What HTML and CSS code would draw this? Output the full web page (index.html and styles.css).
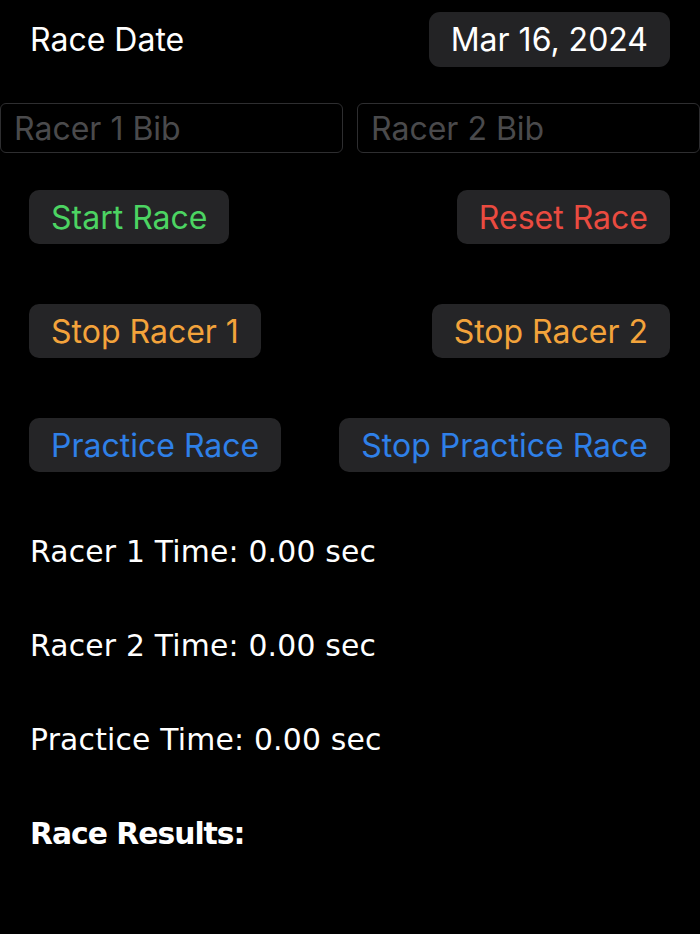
FILE: index.html
```html
<!DOCTYPE html>
<html lang="en">
<head>
    <meta charset="UTF-8">
    <meta name="viewport" content="width=device-width, initial-scale=1.0">
    <title>Race Timer</title>
    <link rel="stylesheet" href="styles.css">
</head>
<body>
    <div class="date-row">
        <span class="label">Race Date</span>
        <button class="date-pill">Mar 16, 2024</button>
    </div>

    <div class="bib-row">
        <input type="text" class="bib" placeholder="Racer 1 Bib">
        <input type="text" class="bib" placeholder="Racer 2 Bib">
    </div>

    <div class="btn-row">
        <button class="btn green">Start Race</button>
        <button class="btn red">Reset Race</button>
    </div>
    <div class="btn-row">
        <button class="btn orange">Stop Racer 1</button>
        <button class="btn orange">Stop Racer 2</button>
    </div>
    <div class="btn-row">
        <button class="btn blue">Practice Race</button>
        <button class="btn blue">Stop Practice Race</button>
    </div>

    <div class="times">
        <p class="time">Racer 1 Time: 0.00 sec</p>
        <p class="time">Racer 2 Time: 0.00 sec</p>
        <p class="time">Practice Time: 0.00 sec</p>
        <p class="time results">Race Results:</p>
    </div>
</body>
</html>
```

FILE: styles.css
```css
body {
    margin: 0;
    background-color: #000;
    color: #fff;
    font-family: Inter, "Noto Sans", sans-serif;
    width: 700px;
    height: 934px;
    overflow: hidden;
}
button {
    font-family: inherit;
    border: none;
    cursor: pointer;
}
.date-row {
    display: flex;
    justify-content: space-between;
    align-items: center;
    padding: 12px 30px 0 30px;
}
.label {
    font-size: 32px;
}
.date-pill {
    height: 55px;
    padding: 0 22px;
    background-color: #232325;
    color: #fff;
    font-size: 32px;
    border-radius: 11px;
}
.bib-row {
    display: flex;
    gap: 14px;
    margin-top: 36px;
}
.bib {
    flex: 1;
    min-width: 0;
    height: 50px;
    box-sizing: border-box;
    background: #000;
    border: 1px solid #2e2e30;
    border-radius: 6px;
    padding: 0 13px;
    font-family: inherit;
    font-size: 32px;
    color: #fff;
}
.bib::placeholder {
    color: #4a4a4c;
}
.btn-row {
    display: flex;
    justify-content: space-between;
    padding: 0 30px 0 29px;
    margin-top: 37px;
}
.btn-row + .btn-row {
    margin-top: 60px;
}
.btn {
    height: 54px;
    padding: 0 22px;
    background-color: #252527;
    border-radius: 10px;
    font-size: 32px;
}
.green { color: #4cd462; }
.red { color: #ea4b40; }
.orange { color: #f3a33b; }
.blue { color: #2f80e8; }

.times {
    padding: 0 30px;
    margin-top: 50px;
}
.time {
    margin: 0;
    height: 94px;
    line-height: 60px;
    font-family: "DejaVu Sans", sans-serif;
    font-size: 29.8px;
    letter-spacing: 0.2px;
}
.results {
    font-weight: bold;
    letter-spacing: -1px;
}
```
